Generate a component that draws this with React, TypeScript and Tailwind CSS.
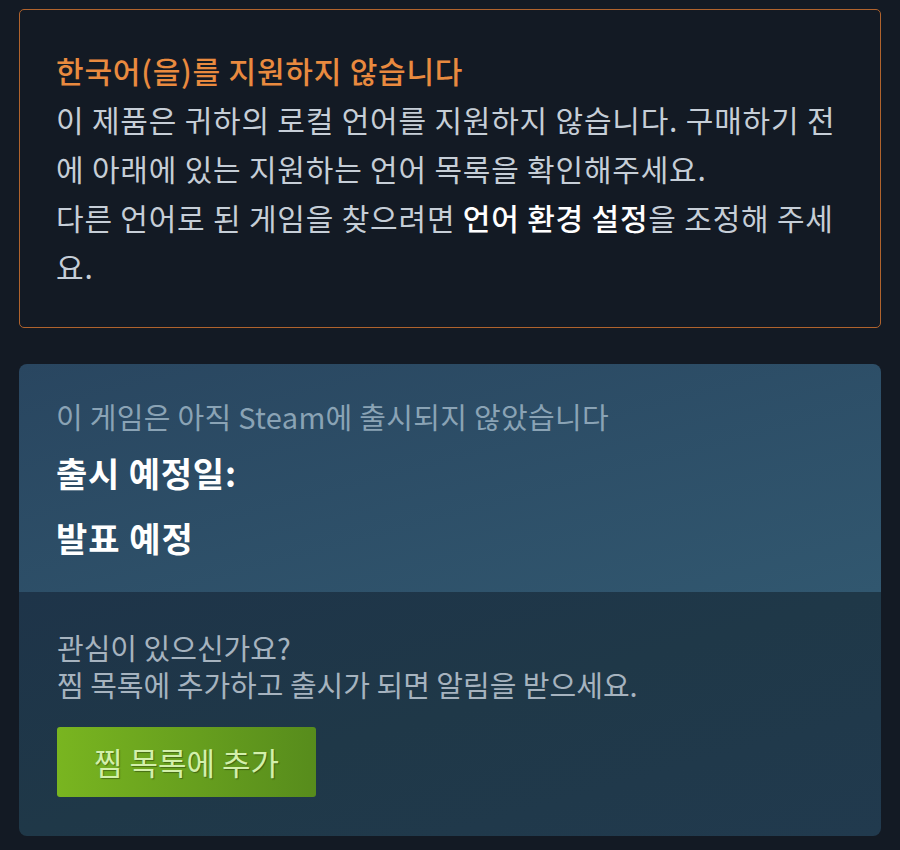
export default function App() {
  const font = { fontFamily: '"Noto Sans CJK KR", "Noto Sans", sans-serif' };

  return (
    <div
      className="min-h-[850px] w-[900px] bg-[#131a24] pt-[9px] px-[19px]"
      style={font}
    >
      {/* language warning */}
      <div className="border border-[#b0632d] rounded-[5px] pl-[36px] pr-[22px] pt-[36px] pb-[36px]">
        <div className="text-[30px] leading-[49px] tracking-[0.8px] text-[#e98a3f] font-medium">
          한국어(을)를 지원하지 않습니다
        </div>
        <p className="text-[30px] leading-[49px] tracking-[0.8px] text-[#c6ced7]">
          이 제품은 귀하의 로컬 언어를 지원하지 않습니다. 구매하기 전에 아래에 있는 지원하는 언어 목록을 확인해주세요.
        </p>
        <p className="text-[30px] leading-[49px] tracking-[0.8px] text-[#c6ced7]">
          다른 언어로 된 게임을 찾으려면{" "}
          <span className="text-white font-medium">언어 환경 설정</span>을 조정해 주세요.
        </p>
      </div>

      {/* release card */}
      <div className="mt-[36px] rounded-[8px] overflow-hidden">
        <div className="bg-gradient-to-br from-[#294660] to-[#31576f] px-[37px] pt-[34px] pb-[32px]">
          <div className="text-[29px] leading-[36px] tracking-[0.3px] text-[#8aa3b5]">
            이 게임은 아직 Steam에 출시되지 않았습니다
          </div>
          <div className="mt-[17px] text-[34px] leading-[44px] tracking-[0.8px] text-white font-semibold">
            출시 예정일:
          </div>
          <div className="mt-[21px] text-[34px] leading-[44px] tracking-[1px] text-white font-semibold">
            발표 예정
          </div>
        </div>
        <div className="bg-gradient-to-br from-[#1e3449] via-[#1f3848] to-[#213a4e] px-[38px] pt-[37px] pb-[39px]">
          <div className="text-[29px] leading-[37px] text-[#a6b3bf]">
            관심이 있으신가요?
          </div>
          <div className="text-[29px] leading-[37px] text-[#a6b3bf]">
            찜 목록에 추가하고 출시가 되면 알림을 받으세요.
          </div>
          <button className="mt-[24px] h-[70px] w-[259px] rounded-[3px] bg-gradient-to-r from-[#79b520] to-[#578c1c] text-[31px] text-[#d3f0ab] [text-shadow:1px_1px_1px_rgba(0,0,0,0.35)]">
            찜 목록에 추가
          </button>
        </div>
      </div>
    </div>
  );
}
